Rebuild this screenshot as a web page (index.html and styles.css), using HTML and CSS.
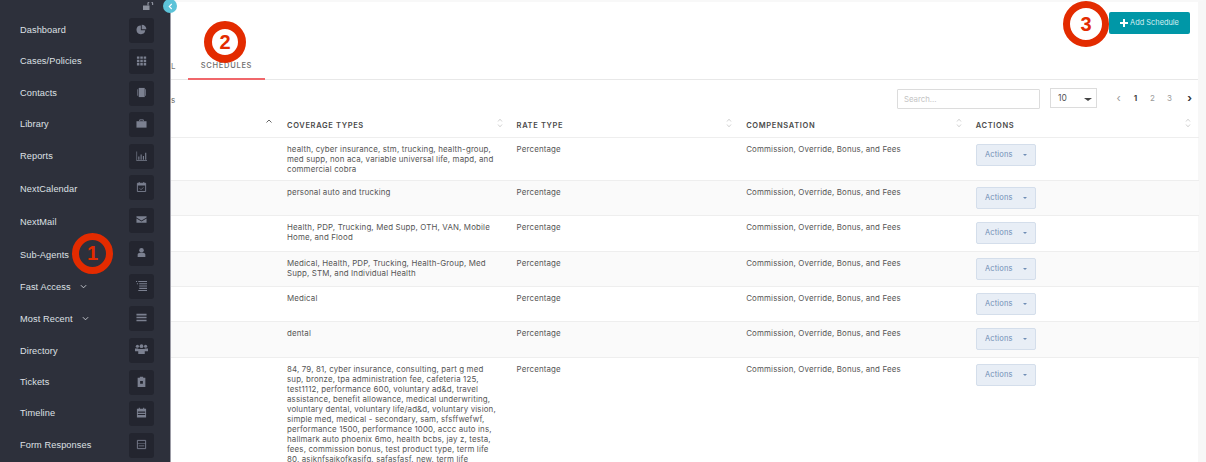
FILE: index.html
```html
<!DOCTYPE html>
<html lang="en">

<head>
  <meta charset="UTF-8">
  <title>Schedules</title>
  <link rel="stylesheet" href="styles.css">
</head>

<body>
  <div class="page">

    <aside class="sidebar">
      <svg class="lock" viewBox="0 0 11 8"><path d="M0 3.500h6.500V8H0z" /><path d="M5 3.500V2a2 2 0 0 1 4.600-.6V3" fill="none" stroke="currentColor" stroke-width="1.200" /></svg>
      <ul class="menu">
        <li class="menu-item">
          <span>Dashboard</span>
          <i class="menu-icon"><svg viewBox="0 0 12 12"><path d="M5.300 1.500a4.800 4.800 0 1 0 4.800 5.400H5.300z" /><path d="M6.300 .8a5 5 0 0 1 5 5H6.300z" /></svg></i>
        </li>
        <li class="menu-item">
          <span>Cases/Policies</span>
          <i class="menu-icon"><svg viewBox="0 0 12 12"><path d="M1 1.500h2.700v2.700H1zM4.700 1.500h2.700v2.700H4.700zM8.400 1.500h2.700v2.700H8.400zM1 5.100h2.700v2.700H1zM4.700 5.100h2.700v2.700H4.700zM8.400 5.100h2.700v2.700H8.400zM1 8.700h2.700v2.700H1zM4.700 8.700h2.700v2.700H4.700zM8.400 8.700h2.700v2.700H8.400z" /></svg></i>
        </li>
        <li class="menu-item">
          <span>Contacts</span>
          <i class="menu-icon"><svg viewBox="0 0 12 12"><path d="M3 1h6.500v10H3z" /><path d="M1.500 2.500h.8v7h-.8zM10 2.500h.8v7H10z" /></svg></i>
        </li>
        <li class="menu-item">
          <span>Library</span>
          <i class="menu-icon"><svg viewBox="0 0 12 12"><path d="M.5 3.500h11v7H.5z" /><path d="M4 3.500V2h4v1.500" fill="none" stroke="currentColor" /></svg></i>
        </li>
        <li class="menu-item">
          <span>Reports</span>
          <i class="menu-icon"><svg viewBox="0 0 12 12"><path d="M.5 1.500h.7v9.800H12v.7H.5zM2.500 7h1.200v3.500H2.500zM5 5h1.200v5.500H5zM7.500 6.500h1.200v4H7.500zM10 3h1.200v7.500H10z" /></svg></i>
        </li>
        <li class="menu-item menu-item-tall">
          <span>NextCalendar</span>
          <i class="menu-icon"><svg viewBox="0 0 12 12"><path d="M1.500 2.500h9v9h-9z" fill="none" stroke="currentColor" /><path d="M1.500 2.500h9V5h-9zM3 1h1v2H3zM8 1h1v2H8z" /><path d="M4 8l1.500 1.500L8 7" fill="none" stroke="currentColor" stroke-width=".8" /></svg></i>
        </li>
        <li class="menu-item menu-item-tall">
          <span>NextMail</span>
          <i class="menu-icon"><svg viewBox="0 0 12 12"><path d="M.5 2.500h11v1.200L6 7 .5 3.700zM.5 5l5.500 3.300L11.500 5v4.500H.5z" /></svg></i>
        </li>
        <li class="menu-item menu-item-tall">
          <span>Sub-Agents</span>
          <i class="menu-icon"><svg viewBox="0 0 12 12"><circle cx="6" cy="3.500" r="2.500" /><path d="M1.800 11V8.500c0-1.500 1.200-2.300 2.500-2.300h3.400c1.300 0 2.500.8 2.500 2.300V11z" /></svg></i>
        </li>
        <li class="menu-item menu-item-mid">
          <span>Fast Access <svg class="chevron" viewBox="0 0 8 5"><path d="M1 1l3 3 3-3" /></svg></span>
          <i class="menu-icon"><svg viewBox="0 0 12 12"><path d="M0 1h1.200v1.200H0zM2.500 1H12v1.200H2.500zM1 3.500h1.200v1.200H1zM3.500 3.500H12v1.200H3.500zM3.500 6H12v1.200H3.500zM3.500 8.500H12v1.200H3.500zM2.500 11H12v1H2.500z" /></svg></i>
        </li>
        <li class="menu-item menu-item-mid">
          <span>Most Recent <svg class="chevron" viewBox="0 0 8 5"><path d="M1 1l3 3 3-3" /></svg></span>
          <i class="menu-icon"><svg viewBox="0 0 12 12"><path d="M.5 2h11v1.700H.5zM.5 5.200h11v1.700H.5zM.5 8.400h11v1.700H.5z" /></svg></i>
        </li>
        <li class="menu-item menu-item-mid">
          <span>Directory</span>
          <i class="menu-icon menu-icon-wide"><svg viewBox="0 0 14 12"><circle cx="2.600" cy="3" r="1.700" /><circle cx="11.400" cy="3" r="1.700" /><circle cx="7" cy="3" r="2" /><path d="M0 5.500h3.500v3H0zM10.500 5.500H14v3h-3.500zM3.500 6h7v5.500h-7z" /></svg></i>
        </li>
        <li class="menu-item">
          <span>Tickets</span>
          <i class="menu-icon"><svg viewBox="0 0 12 12"><path fill-rule="evenodd" d="M1.800 2h2.400V.8h3.600V2h2.400v10H1.800zM4.500 5.500v3h3v-3z" /></svg></i>
        </li>
        <li class="menu-item">
          <span>Timeline</span>
          <i class="menu-icon"><svg viewBox="0 0 12 12"><path fill-rule="evenodd" d="M1 2h2V.7h1.200V2h3.600V.7H9V2h2v9.500H1zM2 5v1.200h8V5zM2 7.500v1.200h8V7.500z" /></svg></i>
        </li>
        <li class="menu-item">
          <span>Form Responses</span>
          <i class="menu-icon"><svg viewBox="0 0 12 12"><path d="M1.500 1.500h9v9h-9z" fill="none" stroke="currentColor" /><path d="M1.500 4.500h9v.8h-9zM3 7h6v.8H3z" /></svg></i>
        </li>
      </ul>
    </aside>

    <button class="collapse"><svg viewBox="0 0 6 8"><path d="M4.500 1L1.500 4l3 3" /></svg></button>

    <main class="content">
      <div class="topbar">
        <a class="btn-add"><svg viewBox="0 0 8 8"><path d="M3 0h2v3h3v2H5v3H3V5H0V3h3z" /></svg>Add Schedule</a>
      </div>

      <div class="tabs">
        <a class="tab-cut">L</a>
        <a class="tab tab-active">SCHEDULES</a>
      </div>

      <div class="toolbar">
        <span class="info-cut">s</span>
        <input class="search" type="text" placeholder="Search...">
        <div class="page-size">10<b class="caret"></b></div>
        <div class="pager">
          <span class="pager-arrow">‹</span>
          <span class="pager-on">1</span>
          <span>2</span>
          <span>3</span>
          <span class="pager-arrow pager-next">›</span>
        </div>
      </div>

      <table class="schedules">
        <colgroup>
          <col class="col-name">
          <col class="col-mid">
          <col class="col-mid">
          <col class="col-mid">
          <col>
        </colgroup>
        <thead>
          <tr>
            <th><svg class="sort sort-up" viewBox="0 0 6 4"><path d="M.5 3.500L3 1l2.500 2.500" /></svg></th>
            <th>Coverage Types<svg class="sort" viewBox="0 0 6 10"><path d="M1 3.500L3 1.200l2 2.300M1 6.500l2 2.300 2-2.300" /></svg></th>
            <th>Rate Type<svg class="sort" viewBox="0 0 6 10"><path d="M1 3.500L3 1.200l2 2.300M1 6.500l2 2.300 2-2.300" /></svg></th>
            <th>Compensation<svg class="sort" viewBox="0 0 6 10"><path d="M1 3.500L3 1.200l2 2.300M1 6.500l2 2.300 2-2.300" /></svg></th>
            <th>Actions<svg class="sort" viewBox="0 0 6 10"><path d="M1 3.500L3 1.200l2 2.300M1 6.500l2 2.300 2-2.300" /></svg></th>
          </tr>
        </thead>
        <tbody>
          <tr>
            <td></td>
            <td>health, cyber insurance, stm, trucking, health-group, med supp, non aca, variable universal life, mapd, and commercial cobra</td>
            <td>Percentage</td>
            <td>Commission, Override, Bonus, and Fees</td>
            <td><a class="btn-actions">Actions<b class="caret"></b></a></td>
          </tr>
          <tr>
            <td></td>
            <td>personal auto and trucking</td>
            <td>Percentage</td>
            <td>Commission, Override, Bonus, and Fees</td>
            <td><a class="btn-actions">Actions<b class="caret"></b></a></td>
          </tr>
          <tr>
            <td></td>
            <td>Health, PDP, Trucking, Med Supp, OTH, VAN, Mobile Home, and Flood</td>
            <td>Percentage</td>
            <td>Commission, Override, Bonus, and Fees</td>
            <td><a class="btn-actions">Actions<b class="caret"></b></a></td>
          </tr>
          <tr>
            <td></td>
            <td>Medical, Health, PDP, Trucking, Health-Group, Med Supp, STM, and Individual Health</td>
            <td>Percentage</td>
            <td>Commission, Override, Bonus, and Fees</td>
            <td><a class="btn-actions">Actions<b class="caret"></b></a></td>
          </tr>
          <tr>
            <td></td>
            <td>Medical</td>
            <td>Percentage</td>
            <td>Commission, Override, Bonus, and Fees</td>
            <td><a class="btn-actions">Actions<b class="caret"></b></a></td>
          </tr>
          <tr>
            <td></td>
            <td>dental</td>
            <td>Percentage</td>
            <td>Commission, Override, Bonus, and Fees</td>
            <td><a class="btn-actions">Actions<b class="caret"></b></a></td>
          </tr>
          <tr>
            <td></td>
            <td>84, 79, 81, cyber insurance, consulting, part g med sup, bronze, tpa administration fee, cafeteria 125, test1112, performance 600, voluntary ad&amp;d, travel assistance, benefit allowance, medical underwriting, voluntary dental, voluntary life/ad&amp;d, voluntary vision, simple med, medical - secondary, sam, sfsffwefwf, performance 1500, performance 1000, accc auto ins, hallmark auto phoenix 6mo, health bcbs, jay z, testa, fees, commission bonus, test product type, term life 80, asjknfsajkofkasjfq, safasfasf, new, term life</td>
            <td>Percentage</td>
            <td>Commission, Override, Bonus, and Fees</td>
            <td><a class="btn-actions">Actions<b class="caret"></b></a></td>
          </tr>
        </tbody>
      </table>
    </main>

    <!-- red call-outs drawn over the screenshot -->
    <div class="marker marker-1">1</div>
    <div class="marker marker-2">2</div>
    <div class="marker marker-3">3</div>
  </div>
</body>

</html>
```

FILE: styles.css
```css
* {
  box-sizing: border-box;
}

html,
body {
  margin: 0;
  height: 100%;
  overflow: hidden;
  background-color: #fff;
}

.page {
  position: relative;
  display: flex;
  width: 1206px;
  height: 462px;
  overflow: hidden;
  font-family: "Inter", "Liberation Sans", sans-serif;
}

/* sidebar */
.sidebar {
  position: relative;
  flex: 0 0 171px;
  padding-top: 18px;
  background-color: #2d303b;
  border-right: 1px solid #9c9ca6;
  font-family: "Liberation Sans", sans-serif;
}

.lock {
  position: absolute;
  top: 2px;
  left: 143px;
  width: 11px;
  height: 8px;
  color: #8d919d;
  fill: #8d919d;
}

.menu {
  margin: 0;
  padding: 0;
  list-style: none;
}

.menu-item {
  display: flex;
  align-items: center;
  justify-content: space-between;
  height: 25px;
  margin-bottom: 6.4px;
  padding: 0 16px 0 20px;
  font-size: 9.200px;
  letter-spacing: .1px;
  color: #dfe0e5;
}

.menu-item > span {
  margin-top: -1px;
}

.menu-item-tall {
  margin-bottom: 8px;
}

.menu-item-tall > span {
  margin-top: 3px;
}

.menu-item-mid {
  margin-bottom: 7px;
}

.menu-item-mid > span {
  margin-top: 1px;
}

.menu-icon {
  display: flex;
  align-items: center;
  justify-content: center;
  width: 25px;
  height: 25px;
  background-color: #23252f;
  border-radius: 3px;
  color: #7b8090;
}

.menu-icon svg {
  width: 11px;
  height: 11px;
  margin-top: -2px;
  fill: #7b8090;
}

.menu-icon-wide svg {
  width: 13px;
  height: 12px;
}

.chevron {
  width: 7px;
  height: 5px;
  margin-left: 7px;
  fill: none;
  stroke: #d5d7dd;
  stroke-width: 1;
  vertical-align: 1px;
}

.collapse {
  position: absolute;
  top: -1px;
  left: 163px;
  display: flex;
  align-items: center;
  justify-content: center;
  width: 14px;
  height: 14px;
  padding: 0;
  border: 0;
  border-radius: 50%;
  background-color: #5cc3d8;
}

.collapse svg {
  width: 5px;
  height: 7px;
  fill: none;
  stroke: #fff;
  stroke-width: 1.300;
}

/* content */
.content {
  flex: 1;
  min-width: 0;
  border-top: 2px solid #f8f8f8;
  border-right: 8px solid #f7f7f7;
  color: #555;
}

.topbar {
  display: flex;
  justify-content: flex-end;
  height: 46px;
  padding: 10px 8px 0 0;
}

.btn-add {
  display: flex;
  align-items: center;
  justify-content: center;
  gap: 2px;
  width: 81px;
  height: 22px;
  padding-bottom: 1px;
  background-color: #0097a7;
  border-radius: 2px;
  font-size: 7.400px;
  color: #d5eff2;
}

.btn-add svg {
  width: 8px;
  height: 8px;
  fill: #fff;
}

.tabs {
  display: flex;
  height: 32px;
  border-bottom: 1px solid #e8e8e8;
}

.tab-cut {
  width: 17px;
  padding-top: 13px;
  font-size: 8px;
  color: #777;
}

.tab {
  width: 77px;
  margin-bottom: -1px;
  padding-top: 13px;
  text-align: center;
  font-size: 7.500px;
  font-weight: 500;
  letter-spacing: .7px;
  color: #6d6d6d;
}

.tab-active {
  border-bottom: 2px solid #f0676b;
}

.toolbar {
  display: flex;
  align-items: flex-start;
  height: 33px;
  padding-top: 8px;
}

.info-cut {
  width: 726px;
  padding-top: 7px;
  font-size: 8px;
  color: #666;
}

.search {
  width: 143px;
  height: 20px;
  margin-top: 1px;
  padding: 0 6px;
  border: 1px solid #dcdcdc;
  border-radius: 1px;
  outline: none;
  font-family: "Inter", sans-serif;
  font-size: 7.800px;
}

.search::placeholder {
  color: #c4c4c4;
}

.page-size {
  display: flex;
  align-items: center;
  justify-content: space-between;
  width: 47px;
  height: 20px;
  margin-left: 10px;
  padding: 0 4px 0 7px;
  border: 1px solid #dcdcdc;
  font-size: 8.500px;
  color: #555;
}

.page-size .caret {
  margin-top: 3px;
  border-width: 3px 4px 0;
  border-top-color: #444;
}

.caret {
  display: inline-block;
  width: 0;
  height: 0;
  border-style: solid;
  border-width: 2.500px 2.500px 0;
  border-color: #6f8db5 transparent transparent;
}

.pager {
  display: flex;
  align-items: center;
  height: 20px;
  margin-left: 13px;
  font-size: 8px;
  color: #9a9a9a;
}

.pager span {
  width: 17px;
  text-align: center;
}

.pager-arrow {
  font-size: 11px;
  line-height: 10px;
}

.pager-on {
  font-weight: 700;
  color: #444;
}

.pager-next {
  margin-left: 3px;
  font-weight: 700;
  color: #333;
}

/* table */
.schedules {
  width: 1028px;
  table-layout: fixed;
  border-collapse: collapse;
}

.col-name {
  width: 110px;
}

.col-mid {
  width: 229.600px;
}

.schedules th {
  position: relative;
  height: 24px;
  padding: 2px 6px 0;
  border-bottom: 1px solid #eee;
  text-align: left;
  font-size: 7.500px;
  font-weight: 600;
  letter-spacing: .65px;
  text-transform: uppercase;
  color: #4a4a4a;
}

.sort {
  position: absolute;
  top: 5px;
  right: 8px;
  width: 6px;
  height: 10px;
  fill: none;
  stroke: #bdbdbd;
  stroke-width: .7;
}

.sort-up {
  top: 6px;
  right: 9px;
  height: 4px;
  stroke: #666;
  stroke-width: 1;
}

.schedules td {
  padding: 6px 6px 6.400px;
  border-bottom: 1px solid #eee;
  vertical-align: top;
  font-size: 7.900px;
  line-height: 10px;
  letter-spacing: .15px;
  color: #555;
}

.schedules td:nth-child(2) {
  padding-right: 10px;
}

.schedules tbody tr:nth-child(even) {
  background-color: #fafafa;
}

.btn-actions {
  display: flex;
  align-items: center;
  justify-content: center;
  gap: 10px;
  width: 60px;
  height: 22px;
  background-color: #e8eef6;
  border: 1px solid #d4deeb;
  border-radius: 2px;
  font-size: 7.500px;
  color: #6f8db5;
}

/* call-outs */
.marker {
  position: absolute;
  display: flex;
  align-items: center;
  justify-content: center;
  width: 42px;
  height: 42px;
  background-color: #fff;
  border: 8px solid #e32b00;
  border-radius: 50%;
  font-family: "Liberation Sans", sans-serif;
  font-size: 20px;
  font-weight: 700;
  color: #e32b00;
}

.marker-1 {
  top: 233px;
  left: 72px;
  width: 41px;
  height: 41px;
  border-width: 7px;
  background-color: #2d303b;
}

.marker-2 {
  top: 21px;
  left: 204px;
}

.marker-3 {
  top: 1px;
  left: 1063px;
  width: 46px;
  height: 46px;
  border-width: 7px;
}
```
